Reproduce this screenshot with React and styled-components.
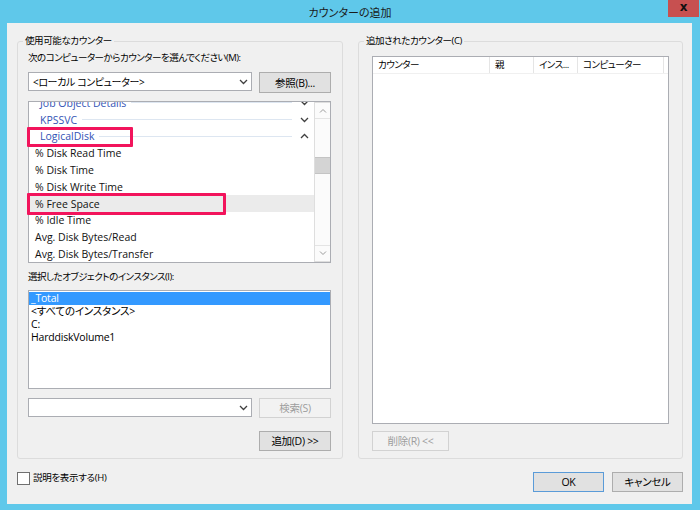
import React from "react";
import styled, { createGlobalStyle } from "styled-components";

const font = `"Open Sans", "Noto Sans CJK JP", sans-serif`;
const jp = `"Noto Sans CJK JP", "Noto Sans", sans-serif`;

const GlobalStyle = createGlobalStyle`
  html, body {
    margin: 0;
    padding: 0;
    background: #5fc8ea;
  }
  body {
    font-family: ${font};
    font-size: 10px;
    font-feature-settings: "palt";
    color: #000;
  }
`;

const counters = [
  { name: "Job Object Details", category: true, arrow: "down" },
  { name: "KPSSVC", category: true, arrow: "down" },
  { name: "LogicalDisk", category: true, arrow: "up" },
  { name: "% Disk Read Time" },
  { name: "% Disk Time" },
  { name: "% Disk Write Time" },
  { name: "% Free Space", hover: true },
  { name: "% Idle Time" },
  { name: "Avg. Disk Bytes/Read" },
  { name: "Avg. Disk Bytes/Transfer" },
];

const instances = ["_Total", "<すべてのインスタンス>", "C:", "HarddiskVolume1"];

const columns = [
  { label: "カウンター", width: 117 },
  { label: "親", width: 44 },
  { label: "インス...", width: 44 },
  { label: "コンピューター", width: 86 },
];

const Chevron = ({ up }) => (
  <svg width="9" height="6" viewBox="0 0 9 6">
    <polyline
      points={up ? "1,5 4.5,1.5 8,5" : "1,1 4.5,4.5 8,1"}
      fill="none"
      stroke="#404040"
      strokeWidth="1.3"
    />
  </svg>
);

const SmallChevron = ({ up }) => (
  <svg width="8" height="5" viewBox="0 0 8 5">
    <polyline
      points={up ? "1,4.5 4,1.5 7,4.5" : "1,0.5 4,3.5 7,0.5"}
      fill="none"
      stroke="#9a9a9a"
      strokeWidth="1"
    />
  </svg>
);

const App = () => (
  <Window>
    <GlobalStyle />
    <TitleBar>
      <span />
      <Title>カウンターの追加</Title>
      <CloseButton>x</CloseButton>
    </TitleBar>
    <Client>
      <Columns>
        <GroupBox $width={327}>
          <Legend>使用可能なカウンター</Legend>
          <Label $top={9}>次のコンピューターからカウンターを選んでください(M):</Label>
          <Row $top={7}>
            <Combo>
              <ComboText>&lt;ローカル コンピューター&gt;</ComboText>
              <Chevron />
            </Combo>
            <Button $width={72} $height={21}>参照(B)...</Button>
          </Row>
          <ListFrame>
            <CounterList>
              <Scroller>
                {counters.map((c) => (
                  <CounterRow key={c.name} $category={c.category} $hover={c.hover}>
                    <span>{c.name}</span>
                    {c.category && (
                      <>
                        <Rule />
                        <Chevron up={c.arrow === "up"} />
                      </>
                    )}
                  </CounterRow>
                ))}
              </Scroller>
              <ScrollBar>
                <ArrowBox>
                  <SmallChevron up />
                </ArrowBox>
                <Track>
                  <Thumb />
                </Track>
                <ArrowBox $bottom>
                  <SmallChevron />
                </ArrowBox>
              </ScrollBar>
            </CounterList>
            <Mark $left={-1} $top={26} $w={106} $h={20} />
            <Mark $left={-1} $top={92} $w={199} $h={22} />
          </ListFrame>
          <Label $top={7}>選択したオブジェクトのインスタンス(I):</Label>
          <InstanceList>
            {instances.map((name, i) => (
              <InstanceRow key={name} $selected={i === 0}>
                {name}
              </InstanceRow>
            ))}
          </InstanceList>
          <Row $top={9}>
            <Combo>
              <ComboText />
              <Chevron />
            </Combo>
            <Button $width={72} $height={20} $disabled>
              検索(S)
            </Button>
          </Row>
          <Row $top={13} $end>
            <Button $width={72} $height={20}>追加(D) &gt;&gt;</Button>
          </Row>
        </GroupBox>
        <GroupBox $width={326} $padLeft={13}>
          <Legend>追加されたカウンター(C)</Legend>
          <Table>
            <HeaderRow>
              {columns.map((col) => (
                <HeaderCell key={col.label} $width={col.width}>
                  {col.label}
                </HeaderCell>
              ))}
            </HeaderRow>
          </Table>
          <Row $top={7}>
            <Button $width={77} $height={20} $disabled>
              削除(R) &lt;&lt;
            </Button>
          </Row>
        </GroupBox>
      </Columns>
      <Footer>
        <CheckLabel>
          <Box />
          説明を表示する(H)
        </CheckLabel>
        <Actions>
          <Button $width={71} $height={20} $default>
            OK
          </Button>
          <Button $width={71} $height={20}>キャンセル</Button>
        </Actions>
      </Footer>
    </Client>
  </Window>
);

export default App;

const Window = styled.div`
  width: 700px;
  height: 510px;
  background: #5fc8ea;
  display: flex;
  flex-direction: column;
  overflow: hidden;
`;

const TitleBar = styled.div`
  height: 23px;
  display: grid;
  grid-template-columns: 1fr auto 1fr;
  align-items: start;
`;

const Title = styled.div`
  font-family: ${jp};
  line-height: 24px;
  font-size: 11px;
  color: #1a1a1a;
`;

const CloseButton = styled.div`
  justify-self: end;
  width: 31px;
  height: 17px;
  margin-right: 1px;
  background: #c75050;
  color: #111;
  font-family: "DejaVu Sans", sans-serif;
  font-weight: bold;
  font-size: 12px;
  line-height: 15px;
  text-align: center;
`;

const Client = styled.div`
  margin: 0 8px 6px 7px;
  height: 481px;
  background: #f0f0f0;
  padding: 18px 9px 0 10px;
  box-sizing: border-box;
`;

const Columns = styled.div`
  display: flex;
  gap: 15px;
`;

const GroupBox = styled.div`
  position: relative;
  width: ${({ $width }) => $width}px;
  height: 418px;
  box-sizing: border-box;
  border: 1px solid #dcdcdc;
  border-radius: 3px;
  padding: 0 11px 0 ${({ $padLeft }) => $padLeft || 10}px;
  display: flex;
  flex-direction: column;
`;

const Legend = styled.div`
  position: absolute;
  top: -8px;
  left: 5px;
  padding: 0 2px;
  background: #f0f0f0;
  line-height: 14px;
  font-size: 9.5px;
  letter-spacing: -0.4px;
`;

const Label = styled.div`
  margin-top: ${({ $top }) => $top}px;
  line-height: 14px;
  font-size: 9.5px;
  letter-spacing: -0.5px;
  white-space: nowrap;
`;

const Row = styled.div`
  margin-top: ${({ $top }) => $top}px;
  display: flex;
  align-items: flex-start;
  justify-content: ${({ $end }) => ($end ? "flex-end" : "flex-start")};
  gap: 7px;
`;

const Combo = styled.div`
  width: 224px;
  height: 19px;
  box-sizing: border-box;
  border: 1px solid #abadb3;
  background: #fff;
  display: flex;
  align-items: center;
  padding: 0 3px 0 4px;
`;

const ComboText = styled.span`
  flex: 1;
  line-height: 16px;
  font-size: 10px;
  letter-spacing: -0.4px;
`;

const Button = styled.div`
  width: ${({ $width }) => $width}px;
  height: ${({ $height }) => $height}px;
  box-sizing: border-box;
  border: 1px solid
    ${({ $disabled, $default }) =>
      $default ? "#5a9bd8" : $disabled ? "#d2d2d2" : "#adadad"};
  background: ${({ $disabled }) => ($disabled ? "#f2f2f2" : "#e1e1e1")};
  color: ${({ $disabled }) => ($disabled ? "#9d9d9d" : "#000")};
  display: flex;
  align-items: center;
  justify-content: center;
  white-space: nowrap;
  line-height: 14px;
  font-size: 10.5px;
  letter-spacing: -0.3px;
`;

const ListFrame = styled.div`
  position: relative;
  margin-top: 8px;
`;

const CounterList = styled.div`
  height: 162px;
  box-sizing: border-box;
  border: 1px solid #abadb3;
  background: #fff;
  display: flex;
  overflow: hidden;
`;

const Scroller = styled.div`
  flex: 1;
  margin-top: -7.5px;
`;

const CounterRow = styled.div`
  height: 16.8px;
  display: flex;
  align-items: center;
  padding: 0 5px 0 ${({ $category }) => ($category ? 11 : 6)}px;
  color: ${({ $category }) => ($category ? "#3353b5" : "#111")};
  background: ${({ $hover }) => ($hover ? "#ebebeb" : "transparent")};
  white-space: nowrap;
  font-size: 10.5px;
`;

const Rule = styled.span`
  flex: 1;
  height: 1px;
  background: #dde6f1;
  margin: 0 8px 0 5px;
`;

const ScrollBar = styled.div`
  width: 16px;
  box-sizing: border-box;
  border: 1px solid #dedede;
  border-right: none;
  background: #fbfbfb;
  display: flex;
  flex-direction: column;
`;

const ArrowBox = styled.div`
  height: 15px;
  display: flex;
  align-items: center;
  justify-content: center;
  border-${({ $bottom }) => ($bottom ? "top" : "bottom")}: 1px solid #e4e4e4;
`;

const Track = styled.div`
  flex: 1;
  padding-top: 38px;
`;

const Thumb = styled.div`
  height: 15px;
  background: #d4d4d4;
  border-top: 1px solid #c4c4c4;
  border-bottom: 1px solid #c4c4c4;
`;

const Mark = styled.div`
  position: absolute;
  left: ${({ $left }) => $left}px;
  top: ${({ $top }) => $top}px;
  width: ${({ $w }) => $w}px;
  height: ${({ $h }) => $h}px;
  box-sizing: border-box;
  border: 3px solid #f2145c;
  border-radius: 1px;
`;

const InstanceList = styled.div`
  margin-top: 6px;
  height: 99px;
  box-sizing: border-box;
  border: 1px solid #abadb3;
  background: #fff;
  padding-top: 1px;
`;

const InstanceRow = styled.div`
  height: 13px;
  line-height: 13px;
  padding-left: 2px;
  font-size: 10.5px;
  letter-spacing: -0.2px;
  background: ${({ $selected }) => ($selected ? "#3399ff" : "transparent")};
  color: ${({ $selected }) => ($selected ? "#fff" : "#000")};
  white-space: nowrap;
`;

const Table = styled.div`
  margin-top: 14px;
  width: 297px;
  height: 368px;
  box-sizing: border-box;
  border: 1px solid #abadb3;
  background: #fff;
`;

const HeaderRow = styled.div`
  height: 16px;
  display: flex;
  border-bottom: 1px solid #f0f0f0;
`;

const HeaderCell = styled.div`
  width: ${({ $width }) => $width}px;
  box-sizing: border-box;
  padding-left: 5px;
  border-right: 1px solid #e5e5e5;
  line-height: 16px;
  font-size: 9.5px;
  letter-spacing: -0.5px;
  white-space: nowrap;
  overflow: hidden;
`;

const Footer = styled.div`
  margin-top: 12px;
  display: flex;
  justify-content: space-between;
  align-items: flex-start;
`;

const CheckLabel = styled.div`
  display: flex;
  align-items: center;
  gap: 3px;
  line-height: 14px;
  font-size: 9.5px;
  letter-spacing: -0.3px;
`;

const Box = styled.span`
  width: 11px;
  height: 11px;
  border: 1px solid #707070;
  background: #fff;
`;

const Actions = styled.div`
  display: flex;
  gap: 8px;
  margin-top: 1px;
`;
